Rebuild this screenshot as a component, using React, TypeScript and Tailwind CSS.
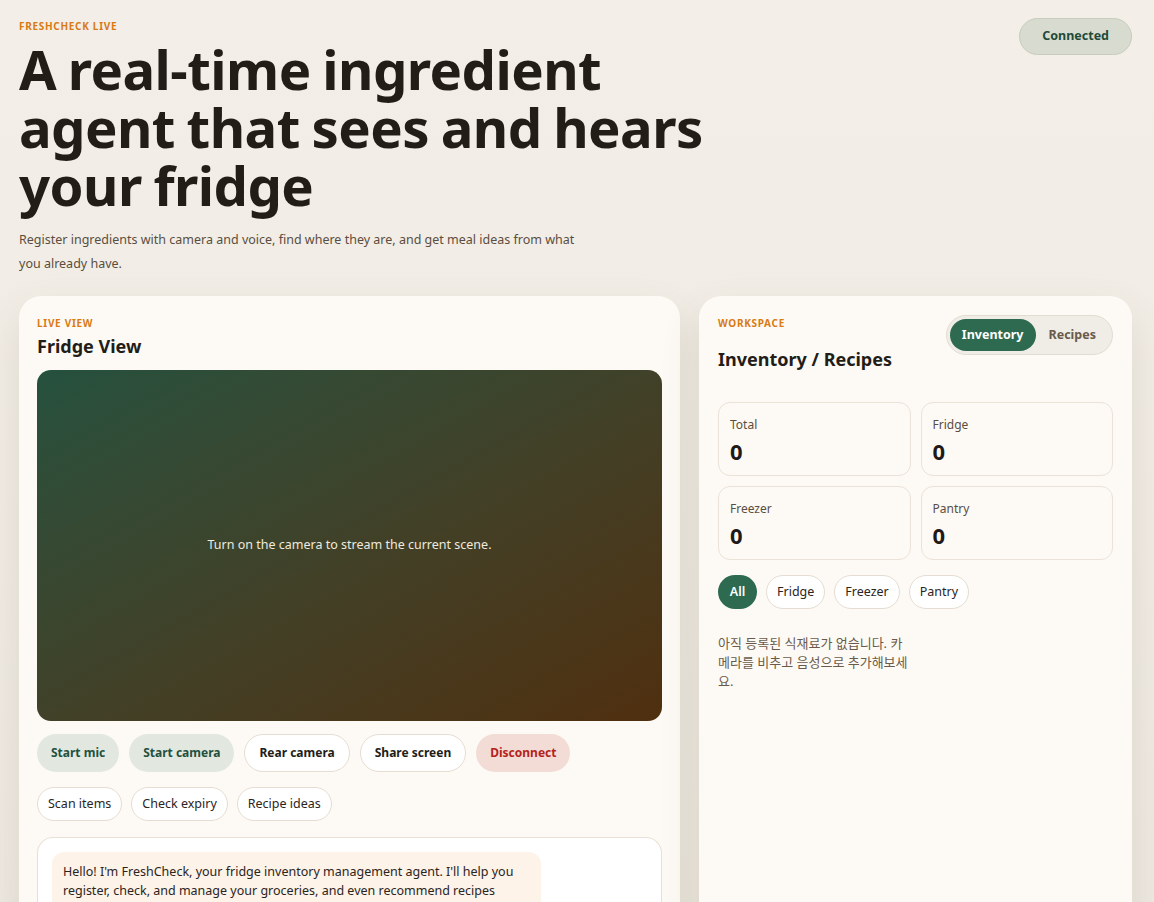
import React from "react";

const font = { fontFamily: '"Noto Sans", "Noto Sans CJK KR", sans-serif' };

const stats = [
  { label: "Total", value: 0 },
  { label: "Fridge", value: 0 },
  { label: "Freezer", value: 0 },
  { label: "Pantry", value: 0 },
];

function Eyebrow({ children }: { children: React.ReactNode }) {
  return (
    <p className="text-[10px] font-bold uppercase tracking-[0.07em] text-[#d97a12]">{children}</p>
  );
}

function LiveView() {
  return (
    <section className="w-[661px] shrink-0 rounded-[22px] bg-[#fdfaf5] px-[18px] pt-[20px] shadow-[0_18px_40px_rgba(90,70,40,0.12)]">
      <Eyebrow>Live view</Eyebrow>
      <h2 className="mt-[2px] text-[18px] font-bold leading-[26px] text-[#231d17]">Fridge View</h2>
      <div className="mt-[11px] flex h-[351px] items-center justify-center rounded-[14px] bg-gradient-to-br from-[#24513e] to-[#4f2f0e]">
        <p className="text-[12.5px] text-[#efe9df]">Turn on the camera to stream the current scene.</p>
      </div>
      <div className="mt-[13px] flex gap-[10px]">
        <button className="h-[38px] rounded-full bg-[#e2e8e0] px-[14px] text-[12px] font-bold text-[#24503e]">Start mic</button>
        <button className="h-[38px] rounded-full bg-[#e2e8e0] px-[14px] text-[12px] font-bold text-[#24503e]">Start camera</button>
        <button className="h-[38px] rounded-full border border-[#e6ddd2] bg-white px-[14px] text-[12px] font-bold text-[#231d17]">Rear camera</button>
        <button className="h-[38px] rounded-full border border-[#e6ddd2] bg-white px-[14px] text-[12px] font-bold text-[#231d17]">Share screen</button>
        <button className="h-[38px] rounded-full bg-[#f3dcd6] px-[14px] text-[12px] font-bold text-[#b4231c]">Disconnect</button>
      </div>
      <div className="mt-[15px] flex gap-[9px]">
        {["Scan items", "Check expiry", "Recipe ideas"].map((t) => (
          <button key={t} className="h-[34px] rounded-full border border-[#e6ddd2] bg-white px-[10px] text-[12.5px] text-[#2b241d]">
            {t}
          </button>
        ))}
      </div>
      <div className="mt-[16px] h-[120px] rounded-t-[16px] border border-b-0 border-[#e8e0d6] bg-white px-[14px] pt-[14px]">
        <div className="w-[489px] rounded-[12px] bg-[#fdf3e8] px-[11px] py-[10px] text-[12.5px] leading-[19px] text-[#2b241d]">
          Hello! I'm FreshCheck, your fridge inventory management agent. I'll help you register, check, and manage your groceries, and even recommend recipes based on what you have.
        </div>
      </div>
    </section>
  );
}

function Workspace() {
  return (
    <section className="flex-1 rounded-[22px] bg-[#fdfaf5] px-[19px] pt-[20px] shadow-[0_18px_40px_rgba(90,70,40,0.12)]">
      <div className="flex items-start justify-between">
        <div>
          <Eyebrow>Workspace</Eyebrow>
          <h2 className="mt-[15px] text-[18px] font-bold leading-[26px] text-[#231d17]">Inventory / Recipes</h2>
        </div>
        <div className="-mt-[1px] flex h-[40px] items-center rounded-full border border-[#e2ddd2] bg-[#efede6] p-[3px]">
          <button className="h-[32px] rounded-full bg-[#2e6a50] px-[12px] text-[12.5px] font-bold text-white">Inventory</button>
          <button className="h-[32px] rounded-full px-[13px] text-[12.5px] font-bold text-[#6b5a4a]">Recipes</button>
        </div>
      </div>
      <div className="mt-[30px] grid grid-cols-2 gap-[10px]">
        {stats.map((s) => (
          <div key={s.label} className="h-[74px] rounded-[12px] border border-[#ebe2d8] px-[11px] pt-[13px]">
            <p className="text-[12px] leading-[17px] text-[#5b4d40]">{s.label}</p>
            <p className="mt-[4px] text-[22px] font-bold leading-[28px] text-[#1f1a15]">{s.value}</p>
          </div>
        ))}
      </div>
      <div className="mt-[15px] flex gap-[9px]">
        <button className="h-[34px] w-[39px] rounded-full bg-[#2e6a50] text-[12.5px] font-semibold text-white">All</button>
        {["Fridge", "Freezer", "Pantry"].map((t) => (
          <button key={t} className="h-[34px] rounded-full border border-[#e6ddd2] bg-white px-[10px] text-[12.5px] text-[#2b241d]">
            {t}
          </button>
        ))}
      </div>
      <p className="mt-[25px] w-[196px] text-[13px] leading-[19px] text-[#6b5a4a]">
        아직 등록된 식재료가 없습니다. 카메라를 비추고 음성으로 추가해보세요.
      </p>
    </section>
  );
}

export default function App() {
  return (
    <div style={font} className="h-[902px] overflow-hidden bg-gradient-to-b from-[#f3efe8] to-[#eee9e1] px-[19px] pt-[19px]">
      <header className="flex items-start justify-between">
        <div>
          <Eyebrow>FreshCheck Live</Eyebrow>
          <h1 className="mt-[6px] w-[720px] text-[54.5px] font-bold leading-[58px] tracking-[-0.01em] text-[#231d17] [word-spacing:-2px]">
            A real-time ingredient agent that sees and hears your fridge
          </h1>
          <p className="mt-[14px] w-[570px] text-[12.5px] leading-[24px] text-[#5b4d40]">
            Register ingredients with camera and voice, find where they are, and get meal ideas from what you already have.
          </p>
        </div>
        <span className="mr-[3px] mt-[-1px] flex h-[37px] items-center rounded-full border border-[#c6cdbd] bg-[#d8dcd0] px-[22px] text-[12.5px] font-bold text-[#1f4a39]">
          Connected
        </span>
      </header>
      <main className="mt-[20px] flex gap-[19px] pr-[3px]">
        <LiveView />
        <Workspace />
      </main>
    </div>
  );
}
